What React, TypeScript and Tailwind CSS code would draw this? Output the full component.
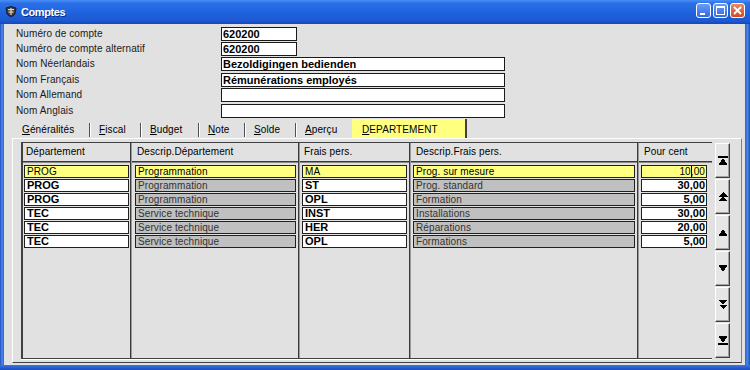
import React from "react";

const FONT = "font-['Liberation_Sans',Arial,Helvetica,sans-serif]";
const NORM = "text-[10px] tracking-[0.1px] font-normal";

type Kind = "white" | "gray";

const formRows = [
  { label: "Numéro de compte", value: "620200", bw: "w-[76px]", rh: "h-[15px]" },
  { label: "Numéro de compte alternatif", value: "620200", bw: "w-[76px]", rh: "h-[15px]" },
  { label: "Nom Néerlandais", value: "Bezoldigingen bedienden", bw: "w-[284px]", rh: "h-[16px]" },
  { label: "Nom Français", value: "Rémunérations employés", bw: "w-[284px]", rh: "h-[15px]" },
  { label: "Nom Allemand", value: "", bw: "w-[284px]", rh: "h-[16px]" },
  { label: "Nom Anglais", value: "", bw: "w-[284px]", rh: "h-[14px]" },
];

const tabs = [
  { k: "G", rest: "énéralités", w: "w-[77px]", sep: true },
  { k: "F", rest: "iscal", w: "w-[51px]", sep: true },
  { k: "B", rest: "udget", w: "w-[58px]", sep: true },
  { k: "N", rest: "ote", w: "w-[46px]", sep: true },
  { k: "S", rest: "olde", w: "w-[51px]", sep: true },
  { k: "A", rest: "perçu", w: "w-[55px]", sep: false },
];

const cols: { header: string; w: string; hpl: string; cpad: string; kind: Kind; right: boolean }[] = [
  { header: "Département", w: "w-[107px]", hpl: "pl-[3px]", cpad: "pl-[1px] pr-[1px]", kind: "white", right: false },
  { header: "Descrip.Département", w: "w-[166px]", hpl: "pl-[5px]", cpad: "pl-[3px] pr-[2px]", kind: "gray", right: false },
  { header: "Frais pers.", w: "w-[109px]", hpl: "pl-[4px]", cpad: "pl-[2px] pr-[2px]", kind: "white", right: false },
  { header: "Descrip.Frais pers.", w: "w-[226px]", hpl: "pl-[5px]", cpad: "pl-[2px] pr-[2px]", kind: "gray", right: false },
  { header: "Pour cent", w: "w-[73px]", hpl: "pl-[5px]", cpad: "pl-[2px] pr-[5px]", kind: "white", right: true },
];

const rows = [
  ["PROG", "Programmation", "MA", "Prog. sur mesure", "10,00"],
  ["PROG", "Programmation", "ST", "Prog. standard", "30,00"],
  ["PROG", "Programmation", "OPL", "Formation", "5,00"],
  ["TEC", "Service technique", "INST", "Installations", "30,00"],
  ["TEC", "Service technique", "HER", "Réparations", "20,00"],
  ["TEC", "Service technique", "OPL", "Formations", "5,00"],
];

function Cell({ text, kind, sel, right }: { text: string; kind: Kind; sel: boolean; right: boolean }) {
  const bg = sel ? "bg-[#ffff80]" : kind === "white" ? "bg-white" : "bg-[#c0c0c0]";
  const txt = sel
    ? `${NORM} text-black`
    : kind === "white"
    ? "text-[11px] font-bold text-black"
    : `${NORM} text-[#333333]`;
  const content =
    sel && right ? (
      <>
        <span>10</span>
        <span className="relative">
          ,<span className="absolute left-0 top-[-1px] h-[11px] w-px bg-black" />
        </span>
        <span>00</span>
      </>
    ) : (
      text
    );
  return (
    <div
      className={`h-[13px] border border-[#202020] ${bg} ${txt} flex items-center leading-none whitespace-nowrap overflow-hidden ${
        right ? "justify-end pr-[1px]" : "pl-[2px]"
      }`}
    >
      {content}
    </div>
  );
}

function NavIcon({ type }: { type: number }) {
  const common = { width: 10, height: 11, viewBox: "0 0 10 11", shapeRendering: "crispEdges" as const };
  switch (type) {
    case 0:
      return (
        <svg {...common}>
          <rect x="0" y="1" width="10" height="2" fill="#000" />
          <polygon points="5,3 9.5,10 0.5,10" fill="#000" />
        </svg>
      );
    case 1:
      return (
        <svg {...common}>
          <polygon points="5,1 9.5,5.5 0.5,5.5" fill="#000" />
          <polygon points="5,5 9.5,10 0.5,10" fill="#000" />
        </svg>
      );
    case 2:
      return (
        <svg {...common}>
          <polygon points="5,2 9.5,9 0.5,9" fill="#000" />
        </svg>
      );
    case 3:
      return (
        <svg {...common}>
          <polygon points="0.5,2 9.5,2 5,9" fill="#000" />
        </svg>
      );
    case 4:
      return (
        <svg {...common}>
          <polygon points="0.5,1 9.5,1 5,5.5" fill="#000" />
          <polygon points="0.5,5.5 9.5,5.5 5,10" fill="#000" />
        </svg>
      );
    default:
      return (
        <svg {...common}>
          <polygon points="0.5,1 9.5,1 5,8" fill="#000" />
          <rect x="0" y="8" width="10" height="2" fill="#000" />
        </svg>
      );
  }
}

export default function App() {
  return (
    <div className={`w-[750px] h-[370px] flex flex-col overflow-hidden ${FONT}`}>
      {/* Title bar */}
      <div className="h-[24px] flex items-start justify-between bg-[linear-gradient(to_bottom,#4a8ef5_0%,#2a6fe8_14%,#2063de_50%,#1c59d2_86%,#1548b8_100%)]">
        <div className="flex items-center h-[24px] pl-[4px] gap-[3px]">
          <svg width="14" height="14" viewBox="0 0 14 14">
            <path d="M2 3 Q7 0 12 3 L11 9 Q7 14 3 9 Z" fill="#3a3a3a" stroke="#111" strokeWidth="0.8" />
            <rect x="4" y="4" width="6" height="1.2" fill="#d8d8d8" />
            <rect x="4.5" y="6.5" width="5" height="1.2" fill="#d8d8d8" />
            <rect x="6.4" y="3" width="1.2" height="7" fill="#d8d8d8" />
          </svg>
          <span className="text-white font-bold text-[11px] tracking-[-0.4px] [text-shadow:1px_1px_0_#0b2f8a]">
            Comptes
          </span>
        </div>
        <div className="flex gap-[2px] pt-[3px] pr-[5px]">
          <div className="w-[15px] h-[15px] rounded-[3px] border border-white bg-[linear-gradient(to_bottom,#6a9cf6,#2f6be2)] relative">
            <div className="absolute left-[3px] top-[9px] w-[5px] h-[2px] bg-white" />
          </div>
          <div className="w-[15px] h-[15px] rounded-[3px] border border-white bg-[linear-gradient(to_bottom,#6a9cf6,#2f6be2)] relative">
            <div className="absolute left-[2px] top-[2px] w-[9px] h-[9px] border border-white border-t-2" />
          </div>
          <div className="w-[15px] h-[15px] rounded-[3px] border border-white bg-[linear-gradient(to_bottom,#ec8a62,#cf4a20)] flex items-center justify-center">
            <svg width="9" height="9" viewBox="0 0 9 9">
              <path d="M1 1 L8 8 M8 1 L1 8" stroke="#fff" strokeWidth="1.8" />
            </svg>
          </div>
        </div>
      </div>

      {/* Body with blue frame */}
      <div className="flex flex-1">
        <div className="w-[4px] bg-[linear-gradient(to_right,#1c4fc2,#5088e6,#2d64d6)]" />
        <div className="flex-1 bg-[#e1e1e1] flex flex-col">
          {/* Form */}
          <div className="pt-[3px] pl-[12px] flex flex-col">
            {formRows.map((r) => (
              <div key={r.label} className={`${r.rh} flex items-start`}>
                <div className="h-[14px] flex items-center">
                  <div className={`w-[205px] ${NORM} text-[#1a1a1a] leading-none`}>{r.label}</div>
                  <div
                    className={`${r.bw} h-[14px] bg-white border border-[#1a1a1a] flex items-center pl-[1px] text-[11px] font-bold text-black leading-none whitespace-nowrap`}
                  >
                    {r.value}
                  </div>
                </div>
              </div>
            ))}
          </div>

          {/* Tabs */}
          <div className="mt-[1px] h-[19px] pl-[10px] flex">
            {tabs.map((t) => (
              <div key={t.k} className={`${t.w} h-[19px] flex justify-between`}>
                <div className={`pl-[8px] pt-[3px] flex items-center ${NORM} text-black leading-none`}>
                  <span>
                    <u className="underline-offset-[1px]">{t.k}</u>
                    {t.rest}
                  </span>
                </div>
                {t.sep && <div className="self-end mb-[1px] w-[2px] h-[14px] border-l border-[#505050] bg-white" />}
              </div>
            ))}
            <div className="w-[115px] h-[19px] bg-[#ffff80] border-r-2 border-[#404040] flex items-center pl-[10px] pt-[2px]">
              <span className={`${NORM} text-black leading-none`}>
                <u className="underline-offset-[1px]">D</u>EPARTEMENT
              </span>
            </div>
          </div>

          {/* Panel */}
          <div className="ml-[8px] w-[730px] h-[225px] border border-white border-r-[#808080] border-b-[#404040] flex pt-[3px] pl-[8px]">
            {/* Grid */}
            <div className="w-[691px] h-[217px] flex border-l-2 border-t border-b border-[#404040] shadow-[0_1px_0_#ffffff]">
              {cols.map((c, ci) => (
                <React.Fragment key={c.header}>
                  {ci > 0 && <div className="w-[2px] self-stretch border-l border-[#3a3a3a] bg-[#9a9a9a]" />}
                  <div className={`${c.w} flex flex-col`}>
                    <div className={`h-[18px] flex items-center ${c.hpl} ${NORM} text-black leading-none whitespace-nowrap`}>
                      {c.header}
                    </div>
                    <div className="h-[2px] border-t border-[#3a3a3a] bg-[#8a8a8a]" />
                    <div className={`mt-[2px] flex flex-col gap-[1px] ${c.cpad}`}>
                      {rows.map((r, ri) => (
                        <Cell key={ri} text={r[ci]} kind={c.kind} sel={ri === 0} right={c.right} />
                      ))}
                    </div>
                  </div>
                </React.Fragment>
              ))}
            </div>
            {/* Nav buttons */}
            <div className="ml-[3px] mt-[1px] flex flex-col gap-[1px]">
              {[0, 1, 2, 3, 4, 5].map((i) => (
                <div
                  key={i}
                  className="w-[15px] h-[35px] bg-[#e6e6e6] border border-t-white border-l-white border-r-[#404040] border-b-[#404040] shadow-[inset_-1px_-1px_0_#a0a0a0] flex items-center justify-center"
                >
                  <NavIcon type={i} />
                </div>
              ))}
            </div>
          </div>
          <div className="flex-1" />
        </div>
        <div className="w-[5px] bg-[linear-gradient(to_right,#2d64d6,#4a82e4,#1c4fc2)]" />
      </div>
      <div className="h-[5px] bg-[linear-gradient(to_bottom,#3d74de,#2a5fd2,#1a4cbe)]" />
    </div>
  );
}
